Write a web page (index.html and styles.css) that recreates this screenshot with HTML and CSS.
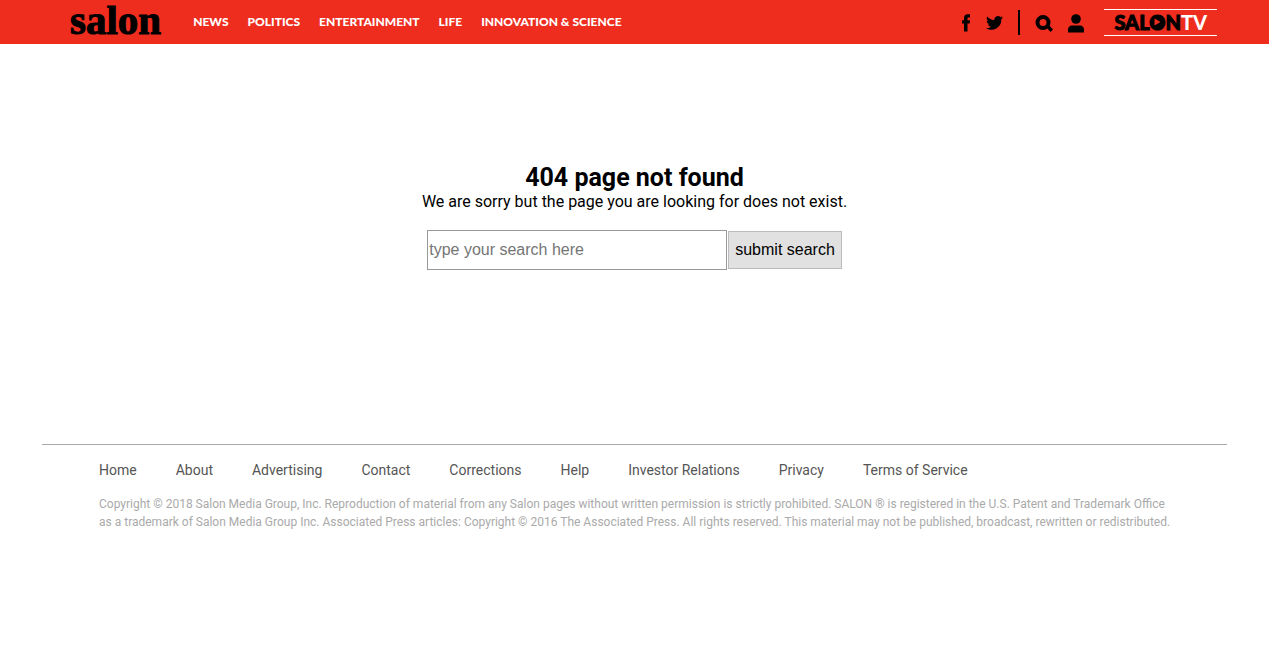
FILE: index.html
```html
<!DOCTYPE html>
<html lang="en">
<head>
<meta charset="utf-8">
<meta name="viewport" content="width=device-width, initial-scale=1">
<title>404 page not found - Salon.com</title>
<link rel="stylesheet" href="styles.css">
</head>
<body>
<header class="header">
  <a class="logo" href="#">salon</a>
  <nav class="nav" aria-label="Sections">
    <a href="#">NEWS</a>
    <a href="#">POLITICS</a>
    <a href="#">ENTERTAINMENT</a>
    <a href="#">LIFE</a>
    <a href="#">INNOVATION &amp; SCIENCE</a>
  </nav>
  <div class="tools">
    <a class="tool" href="#" aria-label="Facebook"><svg width="10" height="18" viewBox="0 0 10 18"><path d="M3 17.500V9.500H1V6.200h2V4.400C3 1.800 4.300.3 6.600.3H9v3.200H7.600C6.800 3.500 6.500 3.900 6.500 4.700v1.500H9L8.700 9.500H6.500v8z"/></svg></a>
    <a class="tool" href="#" aria-label="Twitter"><svg width="17" height="16" viewBox="0 0 24 20"><path d="M24 2.400c-.9.400-1.800.700-2.800.8 1-.6 1.800-1.600 2.200-2.700-1 .6-2 1-3.100 1.200A4.900 4.900 0 0 0 11.900 6.100C7.800 5.900 4.200 3.900 1.700.9c-1.300 2.300-.7 5.100 1.500 6.600-.8 0-1.600-.2-2.200-.6 0 2.300 1.600 4.400 3.900 4.900-.7.200-1.500.2-2.200.1.600 2 2.400 3.400 4.600 3.400A9.900 9.900 0 0 1 0 17.300 14 14 0 0 0 21.500 4.900C22.500 4.200 23.300 3.300 24 2.400z"/></svg></a>
    <span class="divider"></span>
    <a class="tool" href="#" aria-label="Search"><svg width="18" height="19" viewBox="0 0 18 19"><circle cx="8" cy="8.500" r="5.500" fill="none" stroke="#000" stroke-width="4"/><path d="M11 13l2.500-2.500 4.500 5-2.500 2.500z"/></svg></a>
    <a class="tool" href="#" aria-label="Account"><svg width="16" height="19" viewBox="0 0 16 19"><circle cx="8" cy="5" r="4.800"/><path d="M0 18.500v-2.500C0 13 1.500 11.500 4 11.500h8c2.500 0 4 1.500 4 4.500v2.500z"/></svg></a>
    <a class="tv" href="#"><span class="tv-salon">SAL<span class="tv-o">O<svg class="play" viewBox="0 0 14 14"><circle cx="7" cy="7" r="5.500"/><path d="M4.500 3.500l6 3.500-6 3.500z" fill="#ee2d1f"/></svg></span>N</span><span class="tv-mark">TV</span></a>
  </div>
</header>
<main class="main">
  <h1 class="title">404 page not found</h1>
  <p class="message">We are sorry but the page you are looking for does not exist.</p>
  <form class="search">
    <input class="search-box" type="text" placeholder="type your search here" aria-label="Search">
    <button class="search-button" type="submit">submit search</button>
  </form>
</main>
<footer class="footer">
  <nav class="footer-nav" aria-label="Footer">
    <a href="#">Home</a>
    <a href="#">About</a>
    <a href="#">Advertising</a>
    <a href="#">Contact</a>
    <a href="#">Corrections</a>
    <a href="#">Help</a>
    <a href="#">Investor Relations</a>
    <a href="#">Privacy</a>
    <a href="#">Terms of Service</a>
  </nav>
  <p class="copyright">Copyright © 2018 Salon Media Group, Inc. Reproduction of material from any Salon pages without written permission is strictly prohibited. SALON ® is registered in the U.S. Patent and Trademark Office as a trademark of Salon Media Group Inc. Associated Press articles: Copyright © 2016 The Associated Press. All rights reserved. This material may not be published, broadcast, rewritten or redistributed.</p>
</footer>
</body>
</html>
```
FILE: styles.css
```css
* {
  box-sizing: border-box;
}

body {
  margin: 0;
  background: #fff;
  color: #000;
  font-family: Roboto, "Liberation Sans", sans-serif;
  font-size: 16px;
}

a {
  color: inherit;
  text-decoration: none;
}

h1,
p {
  margin: 0;
}

svg {
  display: block;
}

.header {
  display: flex;
  align-items: center;
  height: 44px;
  padding: 0 52px 0 70px;
  background: #ee2d1f;
}

.logo {
  padding-bottom: 4px;
  font: bold 41px/40px "Liberation Serif", serif;
  -webkit-text-stroke: 1px #000;
}

.nav {
  display: flex;
  gap: 19px;
  margin-left: 32px;
  color: #fff;
  font: 900 12px/44px Lato, sans-serif;
  white-space: nowrap;
}

.tools {
  display: flex;
  align-items: center;
  gap: 15px;
  margin-left: auto;
}

.tool {
  padding-top: 2px;
}

.divider {
  width: 2px;
  height: 25px;
  background: #000;
}

.tv {
  display: flex;
  margin-left: 5px;
  padding: 0 10px;
  border-top: 1px solid #fff;
  border-bottom: 1px solid #fff;
  font: 900 20px/25px Lato, sans-serif;
}

.tv-salon {
  -webkit-text-stroke: 1px #000;
}

.tv-o {
  position: relative;
}

.play {
  position: absolute;
  top: 5px;
  left: 1px;
  width: 14px;
  height: 14px;
}

.tv-mark {
  color: #fff;
}

.main {
  padding: 119px 20px 174px;
  text-align: center;
}

.title {
  font-size: 25px;
  line-height: 30px;
}

.message {
  line-height: 18px;
}

.search {
  display: flex;
  justify-content: center;
  align-items: center;
  gap: 1px;
  margin-top: 19px;
}

.search-box {
  width: 300px;
  height: 40px;
  padding: 1px;
  border: 1px solid #999;
  font: 16px "Liberation Sans", sans-serif;
}

.search-box::placeholder {
  color: #757575;
}

.search-button {
  height: 38px;
  padding: 0 6px;
  border: 1px solid #bbb;
  background: #e1e1e1;
  color: #000;
  font: 16px "Liberation Sans", sans-serif;
}

.footer {
  margin: 0 42px;
  padding: 16px 50px 24px 57px;
  border-top: 1px solid #aaa;
}

.footer-nav {
  display: flex;
  flex-wrap: wrap;
  gap: 0 39px;
  color: #555;
  font-size: 14px;
  line-height: 18px;
}

.copyright {
  margin-top: 16px;
  color: #aaa;
  font-size: 12px;
  line-height: 18px;
}
```
